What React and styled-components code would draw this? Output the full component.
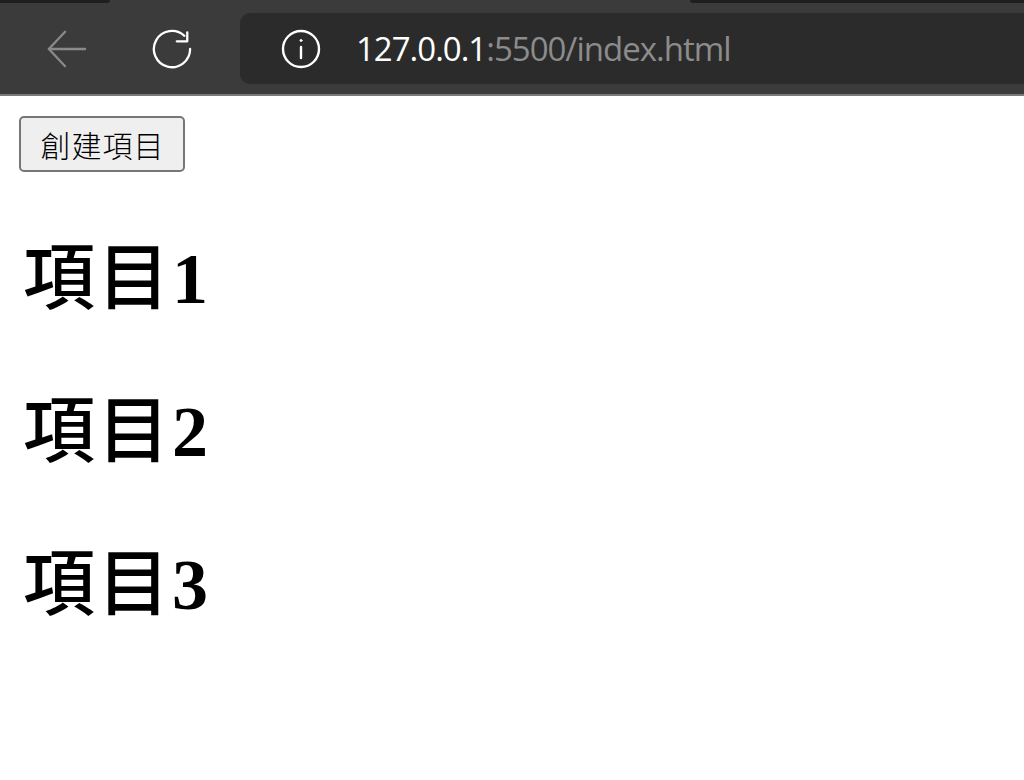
import React from "react";
import styled, { createGlobalStyle } from "styled-components";

const GlobalStyle = createGlobalStyle`
  html, body {
    margin: 0;
    padding: 0;
    background: #fff;
  }
`;

export default function App() {
  return (
    <>
      <GlobalStyle />
      <Chrome>
        <TabStrip>
          <Tab width="110px" />
          <TabGap />
          <Tab width="334px" $flatRight />
        </TabStrip>
        <Toolbar>
          <IconButton>
            <svg width="44" height="44" viewBox="0 0 44 44" fill="none" stroke="#8a8a8a" strokeWidth="2.4" strokeLinecap="round" strokeLinejoin="round">
              <path d="M3 22h38" />
              <path d="M20 4 3 22l17 18" />
            </svg>
          </IconButton>
          <IconButton>
            <svg width="44" height="44" viewBox="0 0 44 44" fill="none" stroke="#fff" strokeWidth="2.4" strokeLinecap="round" strokeLinejoin="round">
              <path d="M41 22A19 19 0 1 1 35 8.2" />
              <path d="M38 4.5V14H27" />
            </svg>
          </IconButton>
          <AddressBar>
            <svg width="40" height="40" viewBox="0 0 40 40" fill="none" stroke="#fff" strokeWidth="2.4" strokeLinecap="round">
              <circle cx="20" cy="20" r="18" />
              <path d="M20 18v11" />
              <circle cx="20" cy="11.5" r="1" fill="#fff" strokeWidth="1" />
            </svg>
            <Url>
              127.0.0.1<UrlRest>:5500/index.html</UrlRest>
            </Url>
          </AddressBar>
        </Toolbar>
      </Chrome>
      <Page>
        <CreateButton>創建項目</CreateButton>
        <Title><Han>項目</Han>1</Title>
        <Title><Han>項目</Han>2</Title>
        <Title><Han>項目</Han>3</Title>
      </Page>
    </>
  );
}

const Chrome = styled.header`
  height: 96px;
  background: #3b3b3b;
  border-bottom: 2px solid #7a7a7a;
  box-sizing: border-box;
  display: flex;
  flex-direction: column;
`;

const TabStrip = styled.div`
  height: 3px;
  display: flex;
`;

const Tab = styled.div`
  width: ${(props) => props.width};
  background: #1f1f1f;
  border-bottom-right-radius: ${(props) => (props.$flatRight ? "0" : "4px")};
  border-bottom-left-radius: ${(props) => (props.$flatRight ? "4px" : "0")};
`;

const TabGap = styled.div`
  flex: 1;
`;

const Toolbar = styled.div`
  flex: 1;
  display: flex;
  align-items: flex-start;
  padding: 10px 0 0 46px;
  gap: 63px;
`;

const IconButton = styled.div`
  width: 42px;
  height: 71px;
  display: flex;
  align-items: center;
  justify-content: center;
`;

const AddressBar = styled.div`
  flex: 1;
  height: 71px;
  margin-left: -16px;
  background: #2b2b2b;
  border-radius: 10px 0 0 10px;
  display: flex;
  align-items: center;
  padding-left: 41px;
  gap: 35px;
`;

const Url = styled.div`
  font-family: "Open Sans", sans-serif;
  font-size: 33px;
  letter-spacing: -1px;
  color: #fff;
`;

const UrlRest = styled.span`
  color: #8c8c8c;
`;

const Page = styled.main`
  padding: 20px 19px;
`;

const CreateButton = styled.button`
  display: block;
  width: 166px;
  height: 56px;
  padding: 0 0 0 1px;
  box-sizing: border-box;
  background: #efefef;
  border: 2px solid #767676;
  border-radius: 5px;
  color: #000;
  font-family: "Noto Sans CJK TC", sans-serif;
  font-size: 30px;
  font-weight: 300;
  letter-spacing: 1px;
`;

const Title = styled.h1`
  margin: 48px 0;
  padding-left: 4px;
  height: 105px;
  line-height: 103px;
  font-family: "Liberation Serif", "Noto Sans CJK TC", serif;
  font-size: 72px;
  font-weight: 700;
  color: #000;
`;

const Han = styled.span`
  font-family: "Noto Sans CJK TC", sans-serif;
  font-weight: 500;
  letter-spacing: 2.5px;
`;
